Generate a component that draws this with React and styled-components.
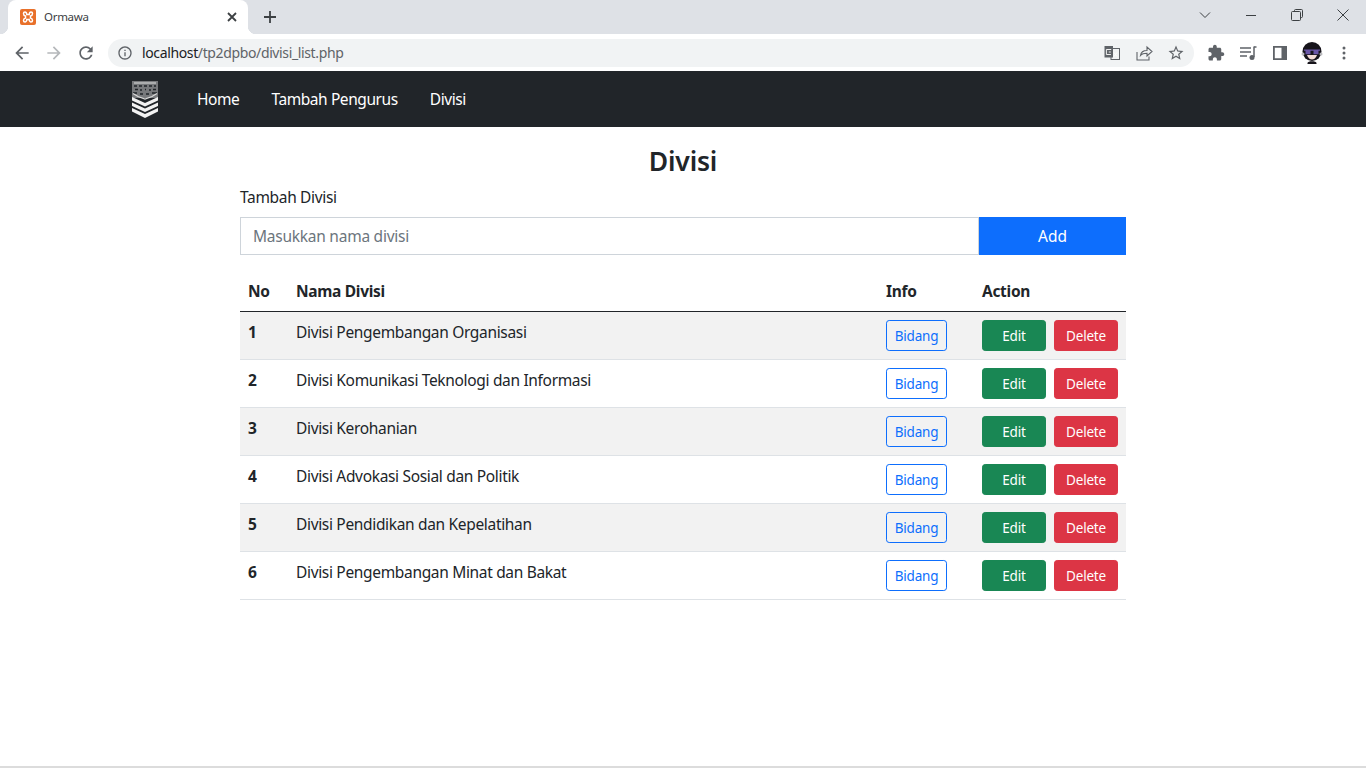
import React from "react";
import styled, { createGlobalStyle } from "styled-components";

const Global = createGlobalStyle`
  html, body { margin: 0; padding: 0; background: #fff; }
  body { font-family: "Noto Sans", "Open Sans", sans-serif; color: #212529; font-size: 15.5px; line-height: 24px; overflow: hidden; }
  * { box-sizing: border-box; }
`;
const Page = styled.div`height: 768px; display: flex; flex-direction: column; border-bottom: 2px solid #dcdcdc;`;
const TabStrip = styled.div`height: 34px; background: #dee1e6; display: flex; align-items: stretch; padding-left: 8px; flex: none;`;
const Tab = styled.div`
  position: relative; width: 240px; background: #fff; border-radius: 8px 8px 0 0;
  display: flex; align-items: center; padding: 0 8px 0 12px; gap: 8px;
  &::before, &::after { content: ""; position: absolute; bottom: 0; width: 8px; height: 8px; }
  &::before { left: -8px; background: radial-gradient(circle at 0 0, transparent 8px, #fff 8.5px); }
  &::after { right: -8px; background: radial-gradient(circle at 100% 0, transparent 8px, #fff 8.5px); }
`;
const Favicon = styled.svg`width: 16px; height: 16px; flex: none;`;
const TabTitle = styled.span`flex: 1; font: 11.5px/16px "Noto Sans", sans-serif; color: #3c4043; letter-spacing: -.3px;`;
const NewTab = styled.svg`width: 16px; height: 16px; margin: 9px 0 0 14px; color: #3c4043;`;
const Spacer = styled.div`flex: 1;`;
const WinBtn = styled.div`width: 46px; display: flex; align-items: center; justify-content: center; color: #3c4043; padding-bottom: 4px;`;
const Toolbar = styled.div`height: 37px; background: #fff; display: flex; align-items: center; padding: 0 14px 0 6px; flex: none;`;
const NavIcon = styled.svg`width: 20px; height: 20px; margin: 0 6px; color: ${p => p.$c || "#5f6368"}; flex: none;`;
const Omni = styled.div`flex: 1; height: 28px; margin: 0 13px 0 6px; background: #f1f3f4; border-radius: 14px; display: flex; align-items: center; padding: 0 9px 0 9px;`;
const Small = styled.svg`width: 16px; height: 16px; color: #5f6368; flex: none;`;
const Url = styled.span`flex: 1; margin-left: 9px; font: 14px/20px "Noto Sans", sans-serif; color: #5f6368; letter-spacing: -.37px; b { font-weight: 400; color: #202124; }`;
const OmniIcon = styled.svg`width: 18px; height: 18px; color: #5f6368; flex: none; margin-left: 14px;`;
const ExtIcon = styled.svg`width: 18px; height: 18px; color: #5f6368; flex: none; margin-right: 14px;`;
const Avatar = styled.svg`width: 22px; height: 22px; margin: 0 13px 0 -2px; flex: none;`;
const Navbar = styled.nav`height: 56px; background: #212529; display: flex; align-items: center; padding-left: 131px; flex: none;`;
const Logo = styled.svg`width: 28px; height: 38px; margin-right: 22px; flex: none;`;
const NavLink = styled.a`color: #fff; line-height: 24px; padding: 0 16px; letter-spacing: -.42px;`;
const Content = styled.main`width: 886px; margin: 0 0 0 240px;`;
const Title = styled.h1`margin: 16px 0 0; font-size: 26.5px; line-height: 36px; font-weight: 600; text-align: center; letter-spacing: -.2px;`;
const Label = styled.label`display: block; margin-top: 6px; line-height: 24px; letter-spacing: -.33px;`;
const Form = styled.div`display: flex; height: 38px; margin-top: 8px;`;
const Input = styled.input`
  flex: 1; min-width: 0; border: 1px solid #ced4da; padding: 0 12px; font: 15.5px "Noto Sans", sans-serif; letter-spacing: -.25px; outline: none; background: #fff;
  &::placeholder { color: #6c757d; opacity: 1; }
`;
const AddBtn = styled.button`width: 147px; border: 0; background: #0d6efd; color: #fff; font: 15.5px "Noto Sans", sans-serif; padding: 0;`;
const Table = styled.table`width: 886px; margin-top: 16px; border-collapse: collapse; table-layout: fixed;`;
const Th = styled.th`height: 40px; padding: 8px; text-align: left; font-weight: 700; border-bottom: 1px solid #212529; letter-spacing: -.3px; line-height: 24px;`;
const Row = styled.tr`background: ${p => (p.$odd ? "#f2f2f2" : "#fff")};`;
const Td = styled.td`height: 48px; padding: 8px; vertical-align: top; border-bottom: 1px solid #dee2e6; letter-spacing: -.33px; font-weight: ${p => (p.$bold ? 700 : 400)}; line-height: 24px;`;
const Actions = styled.div`display: flex; gap: 8px;`;
const Btn = styled.button`
  height: 31px; width: ${p => p.$w}px; border-radius: 3.2px; padding: 0; font: 13.5px "Noto Sans", sans-serif; letter-spacing: -.2px;
  color: ${p => p.$fg}; background: ${p => p.$bg}; border: 1px solid ${p => p.$bd};
`;

const rows = ["Divisi Pengembangan Organisasi", "Divisi Komunikasi Teknologi dan Informasi", "Divisi Kerohanian", "Divisi Advokasi Sosial dan Politik", "Divisi Pendidikan dan Kepelatihan", "Divisi Pengembangan Minat dan Bakat"];

export default function App() {
  return (
    <Page>
      <Global />
      <TabStrip>
        <Tab>
          <Favicon viewBox="0 0 16 16">
            <rect width="16" height="16" rx="2" fill="#e8702a" />
            <path d="M3.500 4.500Q3.500 3 5 3 6.500 3 6.800 5.500H9.200Q9.500 3 11 3 12.500 3 12.500 4.500 12.500 6.500 10.500 7V9Q12.500 9.500 12.500 11.500 12.500 13 11 13 9.500 13 9.200 10.500H6.800Q6.500 13 5 13 3.500 13 3.500 11.500 3.500 9.500 5.500 9V7Q3.500 6.500 3.500 4.500z" fill="none" stroke="#fff" strokeWidth="1.500" />
          </Favicon>
          <TabTitle>Ormawa</TabTitle>
          <Small viewBox="0 0 16 16" style={{ color: "#3c4043" }}><path d="M4 4l8 8M12 4l-8 8" stroke="currentColor" strokeWidth="1.800" /></Small>
        </Tab>
        <NewTab viewBox="0 0 16 16"><path d="M8 2v12M2 8h12" stroke="currentColor" strokeWidth="1.800" /></NewTab>
        <Spacer />
        <WinBtn><svg width="14" height="14" viewBox="0 0 14 14" fill="none"><path d="M2 4.500l5 5 5-5" stroke="currentColor" /></svg></WinBtn>
        <WinBtn><svg width="12" height="12" viewBox="0 0 12 12"><path d="M1 6.500h10" stroke="currentColor" /></svg></WinBtn>
        <WinBtn><svg width="12" height="12" viewBox="0 0 12 12" fill="none"><path d="M3.500 2.500V1.500a1 1 0 0 1 1-1h6a1 1 0 0 1 1 1v6a1 1 0 0 1-1 1H9.500M1.500 2.500h7a1 1 0 0 1 1 1v7a1 1 0 0 1-1 1h-7a1 1 0 0 1-1-1v-7a1 1 0 0 1 1-1z" stroke="currentColor" /></svg></WinBtn>
        <WinBtn><svg width="14" height="14" viewBox="0 0 14 14"><path d="M1.500 1.500l11 11M12.500 1.500l-11 11" stroke="currentColor" /></svg></WinBtn>
      </TabStrip>
      <Toolbar>
        <NavIcon viewBox="0 0 24 24"><path fill="currentColor" d="M20 11H7.830l5.590-5.590L12 4l-8 8 8 8 1.410-1.410L7.830 13H20v-2z" /></NavIcon>
        <NavIcon viewBox="0 0 24 24" $c="#b5b8bb"><path fill="currentColor" d="M12 4l-1.410 1.410L16.170 11H4v2h12.170l-5.580 5.590L12 20l8-8z" /></NavIcon>
        <NavIcon viewBox="0 0 24 24"><path fill="currentColor" d="M17.650 6.350C16.200 4.900 14.210 4 12 4c-4.420 0-7.990 3.580-7.990 8s3.570 8 7.990 8c3.730 0 6.840-2.550 7.730-6h-2.080c-.82 2.330-3.040 4-5.650 4-3.310 0-6-2.690-6-6s2.690-6 6-6c1.660 0 3.140.69 4.220 1.780L13 11h7V4l-2.350 2.350z" /></NavIcon>
        <Omni>
          <Small viewBox="0 0 24 24"><path fill="currentColor" d="M11 7h2v2h-2zm0 4h2v6h-2zm1-9C6.480 2 2 6.480 2 12s4.480 10 10 10 10-4.480 10-10S17.520 2 12 2zm0 18c-4.410 0-8-3.590-8-8s3.590-8 8-8 8 3.590 8 8-3.590 8-8 8z" /></Small>
          <Url><b>localhost</b>/tp2dpbo/divisi_list.php</Url>
          <OmniIcon viewBox="0 0 18 18" fill="none">
            <rect x="8" y="4.500" width="8.500" height="11" stroke="currentColor" />
            <path d="M1.500 2h8.500v11.500H1.500z" fill="currentColor" />
            <path d="M8.200 5.500H3.400v5h4.500M5.800 8h2M11 8.500l3 4M14 8.500l-3 4" stroke="#fff" strokeWidth=".9" />
          </OmniIcon>
          <OmniIcon viewBox="0 0 18 18" fill="none"><path d="M2 8v8h12v-3.500M5.500 11.500c.5-3.500 3-5 6.500-5V3L17 7.500 12 12V9.300c-2.500 0-5 .4-6.500 2.200z" stroke="currentColor" strokeWidth="1.100" /></OmniIcon>
          <OmniIcon viewBox="0 0 24 24"><path fill="currentColor" d="M22 9.240l-7.190-.62L12 2 9.190 8.630 2 9.240l5.460 4.730L5.820 21 12 17.270 18.180 21l-1.630-7.030L22 9.240zM12 15.400l-3.760 2.270 1-4.280-3.320-2.880 4.380-.38L12 6.100l1.710 4.040 4.380.38-3.320 2.880 1 4.280L12 15.400z" /></OmniIcon>
        </Omni>
        <ExtIcon viewBox="0 0 24 24"><path fill="currentColor" d="M20.500 11H19V7c0-1.100-.9-2-2-2h-4V3.500C13 2.120 11.880 1 10.500 1S8 2.120 8 3.500V5H4c-1.100 0-1.990.9-1.990 2v3.800H3.500c1.490 0 2.700 1.210 2.700 2.700s-1.210 2.700-2.700 2.700H2V20c0 1.100.9 2 2 2h3.800v-1.500c0-1.490 1.210-2.700 2.700-2.700 1.490 0 2.700 1.210 2.700 2.700V22H17c1.100 0 2-.9 2-2v-4h1.500c1.380 0 2.500-1.120 2.500-2.500S21.880 11 20.500 11z" /></ExtIcon>
        <ExtIcon viewBox="0 0 18 18"><path d="M1 4h11M1 8h11M1 12h7" stroke="currentColor" strokeWidth="1.500" /><path d="M15 2.500V13" stroke="currentColor" strokeWidth="1.500" /><circle cx="13" cy="13.500" r="2.500" fill="currentColor" /><path d="M15 3h2.500" stroke="currentColor" strokeWidth="1.500" /></ExtIcon>
        <ExtIcon viewBox="0 0 18 18"><path fillRule="evenodd" fill="currentColor" d="M2 2h14v14H2zM3.800 3.800v10.400h6.700V3.800z" /></ExtIcon>
        <Avatar viewBox="0 0 22 22">
          <circle cx="11" cy="9.500" r="9.500" fill="#17141b" />
          <circle cx="2" cy="12" r="1.500" fill="#b9b9bd" />
          <circle cx="20" cy="12" r="1.500" fill="#b9b9bd" />
          <path d="M6 13c1 3 3 4.500 5 4.500s4-1.500 5-4.500z" fill="#f3dcd6" />
          <path d="M3 7.500h16v1.200h-1.500v3.500h-5V8.700h-3v3.500h-5V8.700H3z" fill="#6a56a8" />
          <path d="M6.500 21c0-2.500 9-2.500 9 0v1h-9z" fill="#17141b" />
        </Avatar>
        <Small viewBox="0 0 16 16"><circle cx="8" cy="3" r="1.500" fill="currentColor" /><circle cx="8" cy="8" r="1.500" fill="currentColor" /><circle cx="8" cy="13" r="1.500" fill="currentColor" /></Small>
      </Toolbar>
      <Navbar>
        <Logo viewBox="0 0 28 38">
          <path d="M1 1h26v17H1z" fill="#77797c" />
          <path d="M3 3h22" stroke="#c8c9ca" strokeWidth="1.300" />
          <path d="M3 6h3M8 6h3M13 6h3M18 6h3M23 6h2M4 9.500h3M9 10h2M14 9.500h1M18 10h2M22 9.500h3M2 13h4M9 14h3M15 14h3M21 13h5" stroke="#212529" strokeWidth="1.700" />
          <path d="M2 13.500l5 3 7 2.500 7-2.500 5-3" fill="none" stroke="#d8d8d8" strokeWidth="1.300" />
          <path d="M1 17l13 6 13-6v3.500l-13 6-13-6zM1 22.500l13 6 13-6V26l-13 6-13-6zM1 28l13 6 13-6v3.500L14 38 1 31.500z" fill="#f2f2f2" />
        </Logo>
        <NavLink>Home</NavLink>
        <NavLink>Tambah Pengurus</NavLink>
        <NavLink>Divisi</NavLink>
      </Navbar>
      <Content>
        <Title>Divisi</Title>
        <Label>Tambah Divisi</Label>
        <Form>
          <Input placeholder="Masukkan nama divisi" readOnly />
          <AddBtn>Add</AddBtn>
        </Form>
        <Table>
          <colgroup><col width="48" /><col width="590" /><col width="96" /><col width="152" /></colgroup>
          <thead><tr><Th>No</Th><Th>Nama Divisi</Th><Th>Info</Th><Th>Action</Th></tr></thead>
          <tbody>
            {rows.map((r, i) => (
              <Row key={r} $odd={i % 2 === 0}>
                <Td $bold>{i + 1}</Td>
                <Td>{r}</Td>
                <Td><Btn $w={61} $fg="#0d6efd" $bg="transparent" $bd="#0d6efd">Bidang</Btn></Td>
                <Td><Actions><Btn $w={64} $fg="#fff" $bg="#198754" $bd="#198754">Edit</Btn><Btn $w={64} $fg="#fff" $bg="#dc3545" $bd="#dc3545">Delete</Btn></Actions></Td>
              </Row>
            ))}
          </tbody>
        </Table>
      </Content>
    </Page>
  );
}
